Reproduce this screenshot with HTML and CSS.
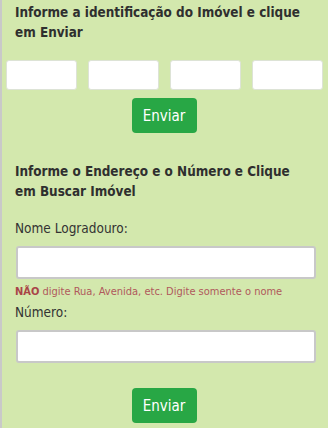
FILE: index.html
```html
<!doctype html>
<html lang="pt-BR">
<head>
	<meta charset="UTF-8">
	<title>Consulta de Imóvel</title>
	<link rel="stylesheet" href="styles.css">
</head>
<body>
	<div class="painel">
		<h3 class="titulo">Informe a identificação do Imóvel e clique em Enviar</h3>
		<div class="ids">
			<input type="text" class="campo-id">
			<input type="text" class="campo-id">
			<input type="text" class="campo-id">
			<input type="text" class="campo-id">
		</div>
		<div class="acao">
			<button class="btn-enviar">Enviar</button>
		</div>

		<h3 class="titulo titulo2">Informe o Endereço e o Número e Clique em Buscar Imóvel</h3>
		<label class="rotulo">Nome Logradouro:</label>
		<input type="text" class="campo">
		<p class="aviso"><b>NÃO</b> digite Rua, Avenida, etc. Digite somente o nome</p>
		<label class="rotulo rotulo-num">Número:</label>
		<input type="text" class="campo">
		<div class="acao acao2">
			<button class="btn-enviar">Enviar</button>
		</div>
	</div>
</body>
</html>
```

FILE: styles.css
```css
html,body{
	margin:0;
	padding:0;
}
body{
	font-family:"DejaVu Sans Condensed","DejaVu Sans",Verdana,sans-serif;
	color:#333;
	background:#d3e8ad;
}
.painel{
	height:428px;
	border-left:2px solid #c9c9c9;
	background:#d3e8ad;
	overflow:hidden;
}
.titulo{
	margin:0;
	padding:3px 16px 0 13px;
	font-size:13.4px;
	line-height:20px;
	font-weight:bold;
	color:#2f2f2f;
}
.ids{
	display:flex;
	gap:11px;
	margin:17px 4px 0 4px;
}
.campo-id{
	box-sizing:border-box;
	width:71px;
	height:30px;
	border:1px solid #dde3d6;
	border-radius:3px;
	background:#fff;
	padding:0;
}
.acao{
	display:flex;
	justify-content:center;
	margin-top:8px;
	margin-left:-2px;
}
.btn-enviar{
	width:65px;
	height:35px;
	border:0;
	border-radius:4px;
	background:#28a745;
	color:#fff;
	font-family:"DejaVu Sans Condensed","DejaVu Sans",sans-serif;
	font-size:15px;
	padding:0;
}
.titulo2{
	margin-top:26px;
}
.rotulo{
	display:block;
	margin:17px 0 0 13px;
	font-size:13.5px;
	line-height:18px;
}
.campo{
	display:block;
	box-sizing:border-box;
	width:300px;
	height:33px;
	margin:9px 0 0 14px;
	border:2px solid #c8c8c8;
	border-radius:3px;
	background:#fff;
}
.aviso{
	margin:6px 0 0 13px;
	font-size:11px;
	line-height:14px;
	color:#b0595c;
}
.aviso b{
	color:#a94448;
}
.rotulo-num{
	margin-top:4px;
}
.acao2{
	margin-top:25px;
}
```
